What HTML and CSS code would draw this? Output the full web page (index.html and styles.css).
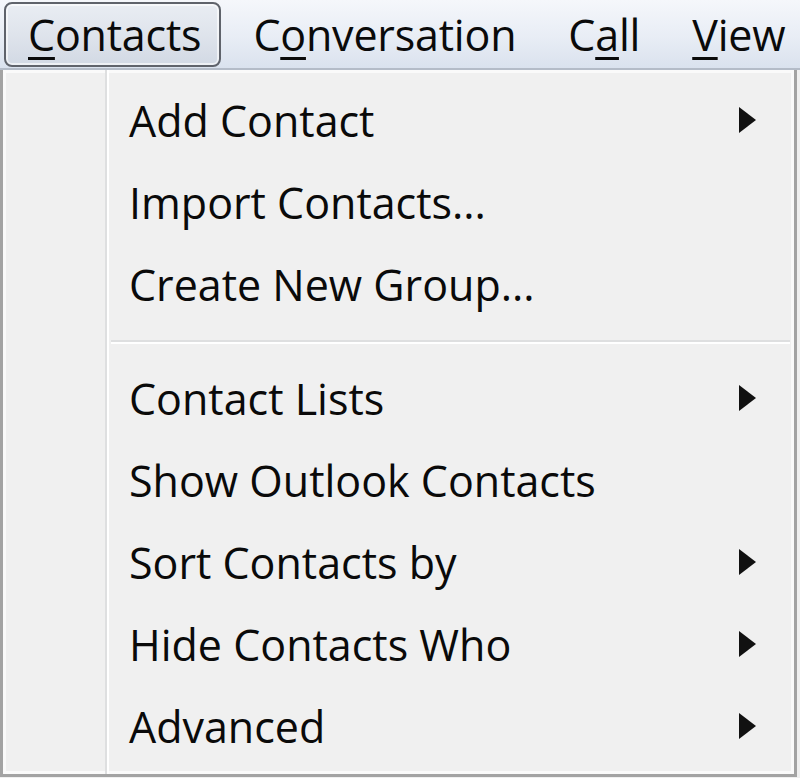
FILE: index.html
```html
<!DOCTYPE html>
<html lang="en">
  <head>
    <meta charset="utf-8" />
    <title>Contacts menu</title>
    <link rel="stylesheet" href="styles.css">
  </head>
  <body>
    <nav class="menubar">
      <div class="menubar-item active"><u>C</u>ontacts</div>
      <div class="menubar-item">C<u>o</u>nversation</div>
      <div class="menubar-item">C<u>a</u>ll</div>
      <div class="menubar-item"><u>V</u>iew</div>
    </nav>

    <div class="dropdown">
      <div class="gutter"></div>
      <ul class="items">
        <li class="item">Add Contact <span class="arrow"></span></li>
        <li class="item">Import Contacts...</li>
        <li class="item">Create New Group...</li>
        <li class="separator"></li>
        <li class="item">Contact Lists <span class="arrow"></span></li>
        <li class="item">Show Outlook Contacts</li>
        <li class="item">Sort Contacts by <span class="arrow"></span></li>
        <li class="item">Hide Contacts Who <span class="arrow"></span></li>
        <li class="item">Advanced <span class="arrow"></span></li>
      </ul>
    </div>
  </body>
</html>
```

FILE: styles.css
```css
html,
body {
  height: 100%;
  margin: 0;
  padding: 0;
  overflow: hidden;
  background: #f0f0f0;
  font-family: 'Open Sans', 'Noto Sans', sans-serif;
  color: #0a0a0a;
}
.menubar {
  display: flex;
  align-items: center;
  height: 70px;
  padding-left: 4px;
  box-sizing: border-box;
  background: linear-gradient(#f5f7fb, #e8edf5 55%, #dae2ee);
  border-bottom: 2px solid #b4bcc8;
  white-space: nowrap;
}
.menubar-item {
  height: 65px;
  line-height: 61px;
  padding: 0 24px;
  border: 2px solid transparent;
  border-radius: 8px;
  box-sizing: border-box;
  font-size: 43px;
  letter-spacing: -0.2px;
}
.menubar-item.active {
  padding: 0 18px 0 22px;
  margin-right: 6px;
  border-color: #5f636b;
  background: linear-gradient(#e9edf3, #dfe4ec 50%, #d2d9e4);
  box-shadow: inset 0 0 0 2px rgba(255, 255, 255, 0.6);
}
u {
  text-decoration-thickness: 3px;
  text-underline-offset: 6px;
}
.dropdown {
  display: flex;
  width: 797px;
  height: 707px;
  box-sizing: border-box;
  border: 3px solid #a3a3a3;
  border-top: 0;
  box-shadow: inset 0 0 0 3px #fafafa;
  background: #f0f0f0;
}
.gutter {
  width: 102px;
  border-right: 2px solid #dedfe0;
  box-shadow: 2px 0 0 #ffffff;
}
.items {
  flex: 1;
  list-style: none;
  margin: 0;
  padding: 9px 0 0 0;
}
.item {
  display: flex;
  align-items: center;
  justify-content: space-between;
  height: 82px;
  padding: 0 38px 0 22px;
  font-size: 43px;
}
.separator {
  height: 2px;
  margin: 15px 4px 13px 4px;
  background: #dedfe0;
  border-bottom: 2px solid #ffffff;
}
.arrow {
  width: 0;
  height: 0;
  border-left: 17px solid #111;
  border-top: 13px solid transparent;
  border-bottom: 13px solid transparent;
}
```
